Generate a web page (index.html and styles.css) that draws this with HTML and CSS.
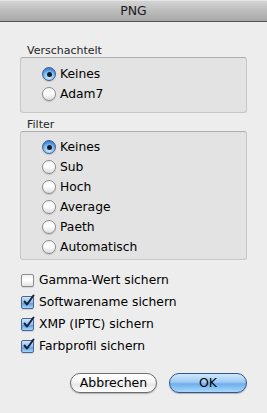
FILE: index.html
```html
<!DOCTYPE html>
<html>
<head>
<meta charset="utf-8">
<title>PNG</title>
<link rel="stylesheet" href="styles.css">
</head>
<body>
<div class="window">
	<div class="titlebar">PNG</div>
	<div class="content">
		<div class="group-label">Verschachtelt</div>
		<div class="box box-interlace">
			<div class="row"><span class="radio on"></span>Keines</div>
			<div class="row"><span class="radio"></span>Adam7</div>
		</div>

		<div class="group-label">Filter</div>
		<div class="box box-filter">
			<div class="row"><span class="radio on"></span>Keines</div>
			<div class="row"><span class="radio"></span>Sub</div>
			<div class="row"><span class="radio"></span>Hoch</div>
			<div class="row"><span class="radio"></span>Average</div>
			<div class="row"><span class="radio"></span>Paeth</div>
			<div class="row"><span class="radio"></span>Automatisch</div>
		</div>

		<div class="checks">
			<div class="check-row"><span class="check"></span>Gamma-Wert sichern</div>
			<div class="check-row"><span class="check on"><svg width="15" height="15" viewBox="0 0 15 15"><path d="M3.5 7.5 L6 10.5 L12.5 1.5" fill="none" stroke="#1c2238" stroke-width="2" stroke-linecap="round" stroke-linejoin="round"/></svg></span>Softwarename sichern</div>
			<div class="check-row"><span class="check on"><svg width="15" height="15" viewBox="0 0 15 15"><path d="M3.5 7.5 L6 10.5 L12.5 1.5" fill="none" stroke="#1c2238" stroke-width="2" stroke-linecap="round" stroke-linejoin="round"/></svg></span>XMP (IPTC) sichern</div>
			<div class="check-row"><span class="check on"><svg width="15" height="15" viewBox="0 0 15 15"><path d="M3.5 7.5 L6 10.5 L12.5 1.5" fill="none" stroke="#1c2238" stroke-width="2" stroke-linecap="round" stroke-linejoin="round"/></svg></span>Farbprofil sichern</div>
		</div>

		<div class="buttons">
			<span class="btn btn-cancel">Abbrechen</span>
			<span class="btn btn-ok">OK</span>
		</div>
	</div>
</div>
</body>
</html>
```

FILE: styles.css
```css
html, body{margin:0; padding:0;}
body{background:#ededed; font-family:"DejaVu Sans", sans-serif; color:#000;}
.window{width:267px; height:413px; overflow:hidden;}

.titlebar{height:21px; line-height:21px; text-align:center; font-size:12.5px; color:#1a1a1a;
	background:linear-gradient(#d6d6d6, #bdbdbd 50%, #a8a8a8); border-top:0; border-bottom:1px solid #535353;
	box-shadow:inset 0 1px 0 #e6e6e6;}

.content{padding:22px 20px 0 20px;}
.group-label{font-size:11px; line-height:13px; height:13px; padding-left:7px; color:#262626;}

.box{background:#e3e3e3; border:1px solid #c6c6c6; border-top-color:#adadad; border-radius:3px; padding-left:21px;}
.box-interlace{padding-top:6px; padding-bottom:8px; margin-bottom:5px;}
.box-filter{padding-top:5px; padding-bottom:2px;}

.row{height:20px; display:flex; align-items:center; font-size:12.3px;}
.radio{width:12px; height:12px; border-radius:50%; margin-right:4px; position:relative; flex:none;
	border:1px solid #8c8c8c; background:linear-gradient(#f4f4f4, #ffffff 45%, #dcdcdc);
	box-shadow:0 1px 1px rgba(0,0,0,0.15);}
.radio.on{border-color:#3f5f93; background:radial-gradient(circle at 50% 75%, #d2ecff 0, #8ec6f3 40%, #3b86d8 75%, #2e6fc0 100%);}
.radio.on:after{content:""; position:absolute; left:3.5px; top:3.5px; width:5px; height:5px; border-radius:50%; background:#161a2a;}

.checks{margin-top:9px;}
.check-row{height:22px; display:flex; align-items:center; font-size:12.3px; padding-left:1px;}
.check{width:11px; height:11px; border:1px solid #8c8c8c; border-radius:2px; margin-right:5px; position:relative; flex:none;
	background:linear-gradient(#f2f2f2, #ffffff 50%, #e2e2e2); box-shadow:0 1px 1px rgba(0,0,0,0.12);}
.check.on{border-color:#4a6595; background:linear-gradient(#cfe6fb, #8dc0ee 50%, #5ea3e4 60%, #a9d6f8);}
.check svg{position:absolute; left:-1px; top:-3px;}

.buttons{margin-top:16px; display:flex; justify-content:flex-end; gap:12px;}
.btn{height:18px; line-height:18px; text-align:center; font-size:12.5px; border-radius:10px; box-shadow:0 1px 1px rgba(0,0,0,0.25);}
.btn-cancel{width:85px; border:1px solid #6d6d6d; background:linear-gradient(#ffffff, #f4f4f4 50%, #e6e6e6 55%, #ffffff);}
.btn-ok{width:76px; border:1px solid #34558f; background:linear-gradient(#cfe8fd, #9fcbf4 45%, #6eaeec 55%, #a7d9fb);}
```
